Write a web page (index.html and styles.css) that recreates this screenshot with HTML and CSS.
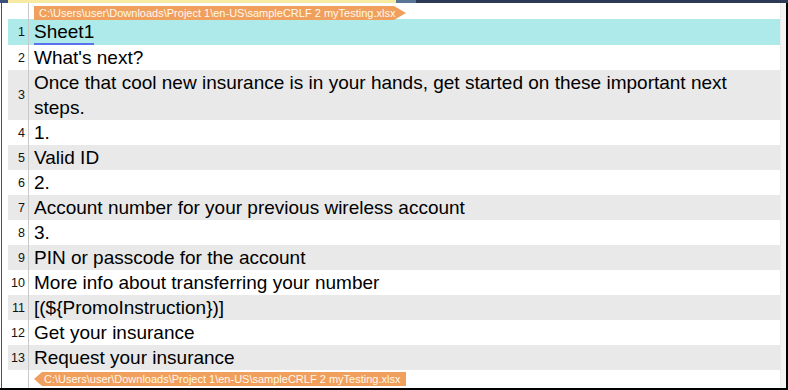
FILE: index.html
```html
<!DOCTYPE html>
<html>
<head>
<meta charset="utf-8">
<link rel="stylesheet" href="styles.css">
</head>
<body>
<div class="window">
  <div class="topbar">
    <div class="tb-left"></div>
    <div class="tb-yellow"></div>
    <div class="tb-blue"></div>
    <div class="tb-navy"></div>
  </div>
  <div class="main">
    <div class="leftedge"></div>
    <div class="grid">
      <div class="tagrow">
        <div class="num"></div>
        <div class="cell"><span class="tag tag-open">C:\Users\user\Downloads\Project 1\en-US\sampleCRLF 2 myTesting.xlsx</span></div>
      </div>
      <div class="row sel"><div class="num">1</div><div class="cell"><span class="spell">Sheet1</span></div></div>
      <div class="row"><div class="num">2</div><div class="cell">What's next?</div></div>
      <div class="row alt"><div class="num">3</div><div class="cell">Once that cool new insurance is in your hands, get started on these important next steps.</div></div>
      <div class="row"><div class="num">4</div><div class="cell">1.</div></div>
      <div class="row alt"><div class="num">5</div><div class="cell">Valid ID</div></div>
      <div class="row"><div class="num">6</div><div class="cell">2.</div></div>
      <div class="row alt"><div class="num">7</div><div class="cell">Account number for your previous wireless account</div></div>
      <div class="row"><div class="num">8</div><div class="cell">3.</div></div>
      <div class="row alt"><div class="num">9</div><div class="cell">PIN or passcode for the account</div></div>
      <div class="row"><div class="num">10</div><div class="cell">More info about transferring your number</div></div>
      <div class="row alt"><div class="num">11</div><div class="cell">[(${PromoInstruction})]</div></div>
      <div class="row"><div class="num">12</div><div class="cell">Get your insurance</div></div>
      <div class="row alt"><div class="num">13</div><div class="cell">Request your insurance</div></div>
      <div class="tagrow bottom">
        <div class="num"></div>
        <div class="cell"><span class="tag tag-close">C:\Users\user\Downloads\Project 1\en-US\sampleCRLF 2 myTesting.xlsx</span></div>
      </div>
    </div>
    <div class="scroll"></div>
    <div class="rightedge"></div>
  </div>
  <div class="bottomedge"></div>
</div>
</body>
</html>
```
FILE: styles.css
```css
* { box-sizing: border-box; }
html, body { margin: 0; padding: 0; background: #fff; }
body { width: 788px; height: 390px; overflow: hidden; font-family: "Liberation Sans", Arial, sans-serif; }
.window { width: 788px; height: 390px; display: flex; flex-direction: column; }
.topbar { height: 3px; display: flex; flex: none; }
.tb-left { width: 8px; background: #3a4f7a; }
.tb-yellow { width: 388px; background: #f7eaa2; }
.tb-blue { width: 20px; background: #5a7696; }
.tb-navy { flex: 1; background: #2b3954; }
.main { flex: 1; display: flex; min-height: 0; }
.leftedge { width: 8px; flex: none; background: #fff; position: relative; }
.leftedge::before { content: ""; position: absolute; left: 1px; top: 0; bottom: 0; width: 1px; background: #3d4f8a; }
.grid { flex: 1; display: flex; flex-direction: column; background: #fff; }
.scroll { width: 6px; flex: none; background: #f4f4f4; border-left: 1px solid #ececec; }
.rightedge { width: 2px; flex: none; background: #000; }
.bottomedge { height: 2px; flex: none; background: #000; }
.row, .tagrow { display: flex; }
.num { width: 21px; flex: none; border-right: 1px solid #c9c9c9; font-size: 12.5px; color: #111; text-align: right; padding-right: 3px; display: flex; align-items: center; justify-content: flex-end; }
.cell { flex: 1; padding-left: 5px; font-size: 19px; line-height: 25px; color: #000; padding-right: 40px; }
.row.alt { background: #e9e9e9; }
.row.sel { background: #aeeaea; }
.tagrow { height: 16px; }
.tagrow .cell { line-height: 14px; padding-top: 1px; }
.tagrow.bottom { height: 19px; }
.tagrow.bottom .cell { padding-top: 0; }
.tag { display: inline-block; height: 14px; background: #f0a05c; color: #fff8ee; font-size: 11px; line-height: 14px; white-space: nowrap; width: 372px; }
.tag-open { padding-left: 5px; clip-path: polygon(0 0, 360px 0, 100% 50%, 360px 100%, 0 100%); }
.tag-close { padding-left: 10px; clip-path: polygon(0 50%, 8px 0, 100% 0, 100% 100%, 8px 100%); }
.spell { display: inline-block; line-height: 22px; border-bottom: 2px solid #5a72ee; }
```
